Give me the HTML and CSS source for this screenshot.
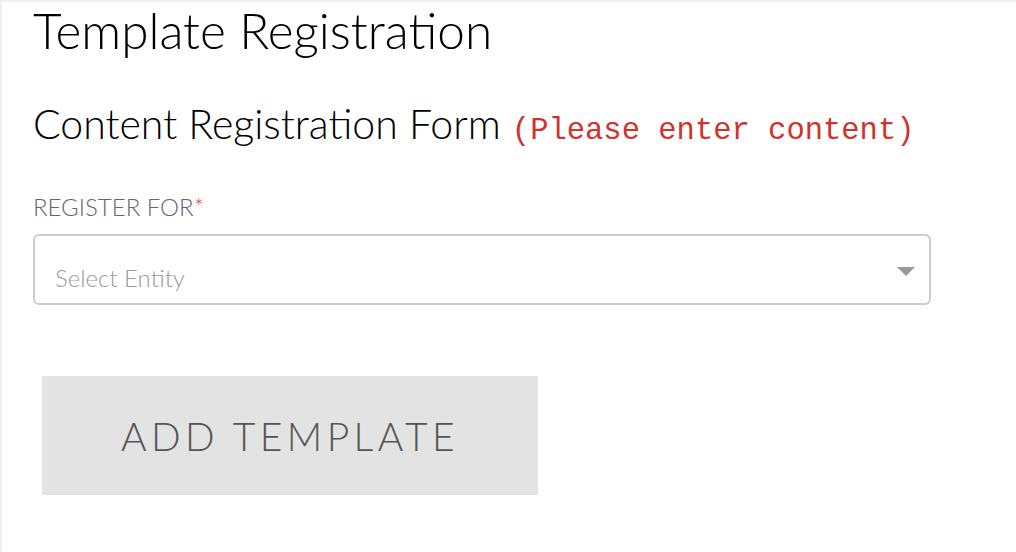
FILE: index.html
```html
<!DOCTYPE html>
<html>
    <head>
        <meta charset="utf-8" />
        <title>Template Registration</title>
        <link rel="stylesheet" href="styles.css">
    </head>
    <body>
        <div class="page">
            <!-- 頁面標題 -->
            <h1 class="title">Template Registration</h1>

            <!-- 表單標題 -->
            <h2 class="form-title">Content Registration Form <span class="hint">(Please enter content)</span></h2>

            <form>
                <div class="field">
                    <label for="entity">REGISTER FOR<span class="required">*</span></label>
                    <div class="select-box">
                        <select id="entity" name="entity">
                            <option value="">Select Entity</option>
                        </select>
                        <span class="arrow"></span>
                    </div>
                </div>

                <!-- 新增按鈕 -->
                <div class="actions">
                    <button type="button" class="button add">ADD TEMPLATE</button>
                </div>
            </form>
        </div>
    </body>
</html>
```

FILE: styles.css
```css
body {
    margin: 0;
    background-color: #f0f0f0;
    font-family: Lato, "Noto Sans", sans-serif;
}

/* 白色主區塊，留出上方與左側的灰邊 */
.page {
    margin: 2px 0 0 2px;
    min-height: 550px;
    background-color: white;
    padding: 0 0 0 31px;
    box-sizing: border-box;
}

.title {
    margin: 0;
    font-size: 49.5px;
    font-weight: 300;
    color: black;
    line-height: 56px;
}

.form-title {
    margin: 41px 0 0 0;
    font-size: 41px;
    font-weight: 300;
    color: black;
    line-height: 50px;
}

.hint {
    font-family: "Liberation Mono", monospace;
    font-size: 30.5px;
    color: #d0332c;
    font-weight: normal;
}

.field {
    margin-top: 36px;
    width: 898px;
}

.field label {
    display: block;
    font-size: 24px;
    font-weight: 300;
    color: #666;
    line-height: 30px;
    margin-bottom: 12px;
}

.required {
    color: #e53935;
}

/* 下拉選單外框 */
.select-box {
    position: relative;
}

.select-box select {
    appearance: none;
    width: 100%;
    height: 71px;
    border: 2px solid #ccc;
    border-radius: 6px;
    background-color: white;
    padding: 16px 20px 0 20px;
    font-family: Lato, "Noto Sans", sans-serif;
    font-size: 24px;
    font-weight: 300;
    color: #999;
    box-sizing: border-box;
}

.select-box .arrow {
    position: absolute;
    right: 16px;
    top: 33px;
    width: 0;
    height: 0;
    border-left: 9px solid transparent;
    border-right: 9px solid transparent;
    border-top: 9px solid #999;
    pointer-events: none;
}

.actions {
    margin-top: 71px;
    padding-left: 9px;
}

.button.add {
    width: 496px;
    height: 119px;
    border: none;
    background-color: #e3e3e3;
    color: #555;
    font-family: Lato, "Noto Sans", sans-serif;
    font-size: 39px;
    font-weight: 300;
    letter-spacing: 4.4px;
    cursor: pointer;
}
```
